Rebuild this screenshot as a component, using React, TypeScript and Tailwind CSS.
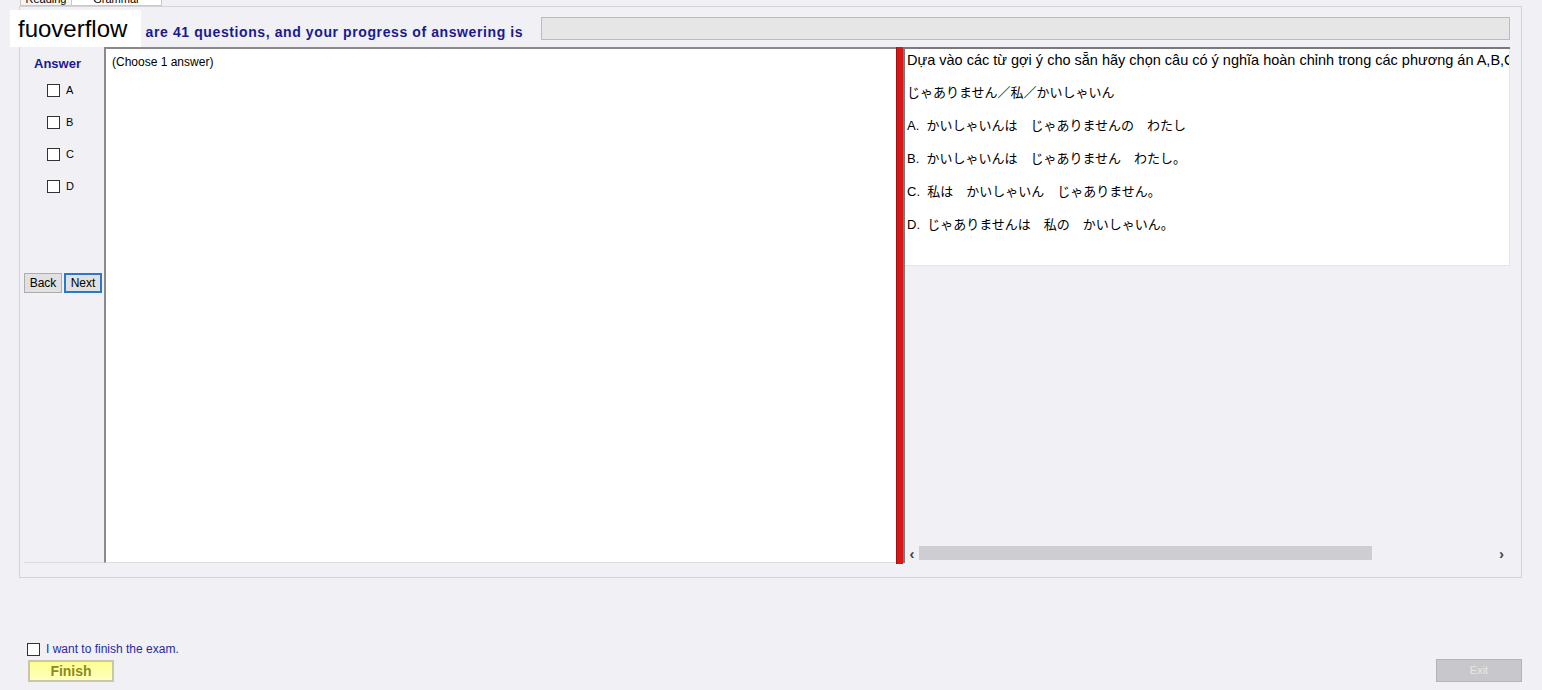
import React from "react";

const options = ["A", "B", "C", "D"];

const questionLines = [
  "じゃありません／私／かいしゃいん",
  "A.  かいしゃいんは　じゃありませんの　わたし",
  "B.  かいしゃいんは　じゃありません　わたし。",
  "C.  私は　かいしゃいん　じゃありません。",
  "D.  じゃありませんは　私の　かいしゃいん。",
];

function Box() {
  return <span className="inline-block w-[13px] h-[13px] bg-white border border-[#333333]" />;
}

export default function App() {
  return (
    <div
      className="relative w-[1542px] h-[690px] overflow-hidden bg-[#f0f0f5] text-black"
      style={{ fontFamily: '"Liberation Sans", Arial, "Noto Sans CJK JP", sans-serif' }}
    >
      {/* tab strip, mostly scrolled off the top */}
      <div className="h-[6px] overflow-hidden flex pl-[20px]">
        <div className="w-[52px] h-[14px] -mt-[8px] bg-[#f5f5f5] border border-[#c8c8c8] text-[11px] text-center leading-[12px]">Reading</div>
        <div className="w-[90px] h-[14px] -mt-[8px] bg-white border border-[#c8c8c8] border-l-0 text-[11px] text-center leading-[12px]">Grammar</div>
      </div>

      {/* main panel */}
      <div className="ml-[19px] w-[1503px] h-[572px] border border-[#d4d4d8] flex flex-col">
        <div className="h-[40px] flex items-start">
          <div className="pl-[80px] pt-[15px] w-[521px] text-[14px] font-bold tracking-[0.6px] text-[#1a1a90] whitespace-nowrap">
            There are 41 questions, and your progress of answering is
          </div>
          <div className="mt-[10px] w-[969px] h-[23px] bg-[#e6e6e6] border border-[#bcbcbc]" />
        </div>

        <div className="flex h-[516px] pl-[4px]">
          {/* answer column */}
          <div className="w-[80px] flex flex-col border-b border-[#dcdce0]">
            <div className="pl-[10px] pt-[7px] text-[13px] font-bold text-[#1a1a90]">Answer</div>
            <div className="flex flex-col gap-[19px] pl-[23px] pt-[10px]">
              {options.map((o) => (
                <div key={o} className="flex items-center gap-[6px] h-[13px] text-[11px]">
                  <Box />
                  <span>{o}</span>
                </div>
              ))}
            </div>
            <div className="flex gap-[2px] mt-[80px]">
              <button className="w-[38px] h-[20px] bg-[#e1e1e1] border border-[#adadad] text-[12px] leading-none">Back</button>
              <button className="w-[38px] h-[20px] bg-[#e1e1e1] border-2 border-[#2a78c8] text-[12px] leading-none">Next</button>
            </div>
          </div>

          {/* middle answer text */}
          <div className="w-[792px] h-[516px] bg-white border-t-2 border-l-2 border-[#8a8a8a] border-b border-b-[#dcdcdc] pl-[6px] pt-[4px] text-[12px]">
            (Choose 1 answer)
          </div>

          {/* splitter */}
          <div className="w-[7px] h-[517px] bg-[#d81818] border-l border-[#a01010]" />

          {/* question panel */}
          <div className="w-[607px] h-[516px] border-t-2 border-l-2 border-[#7a7a7a] flex flex-col">
            <div className="h-[217px] bg-white border-r border-b border-[#e4e4e8] overflow-hidden pl-[2px] pt-[2px]">
              <div className="h-[33px] text-[14.5px] whitespace-nowrap leading-[18px]">
                Dựa vào các từ gợi ý cho sẵn hãy chọn câu có ý nghĩa hoàn chỉnh trong các phương án A,B,C,D
              </div>
              {questionLines.map((l, i) => (
                <div key={i} className="h-[33px] text-[13px] whitespace-pre leading-[18px]">
                  {l}
                </div>
              ))}
            </div>
            <div className="flex-1" />
            <div className="h-[16px] mb-[2px] flex items-center text-[#444] pr-[6px]">
              <span className="w-[14px] text-center text-[15px] font-bold leading-none">‹</span>
              <div className="w-[453px] h-[14px] bg-[#cdcdd2]" />
              <div className="flex-1" />
              <span className="text-[15px] font-bold leading-none">›</span>
            </div>
          </div>
        </div>
      </div>

      {/* bottom controls */}
      <div className="flex items-end justify-between pl-[27px] pr-[20px] pt-[62px]">
        <div className="flex flex-col">
          <div className="flex items-center gap-[6px]">
            <Box />
            <span className="text-[12px] text-[#2a2aa0]">I want to finish the exam.</span>
          </div>
          <button className="ml-[1px] mt-[2px] w-[86px] h-[22px] bg-gradient-to-b from-[#ffff90] to-[#ffffc0] border-2 border-[#c8c8a8] text-[14px] font-bold text-[#8a8a1e] leading-none">
            Finish
          </button>
        </div>
        <button className="w-[86px] h-[23px] bg-[#c8c8cc] border border-[#b4b4b8] text-[11px] text-[#e6e6e6]">Exit</button>
      </div>

      {/* watermark label */}
      <div className="absolute left-[10px] top-[10px] w-[131px] h-[37px] bg-white pl-[8px] pt-[5px] text-[24px] leading-[28px] text-black">
        fuoverflow
      </div>
    </div>
  );
}
